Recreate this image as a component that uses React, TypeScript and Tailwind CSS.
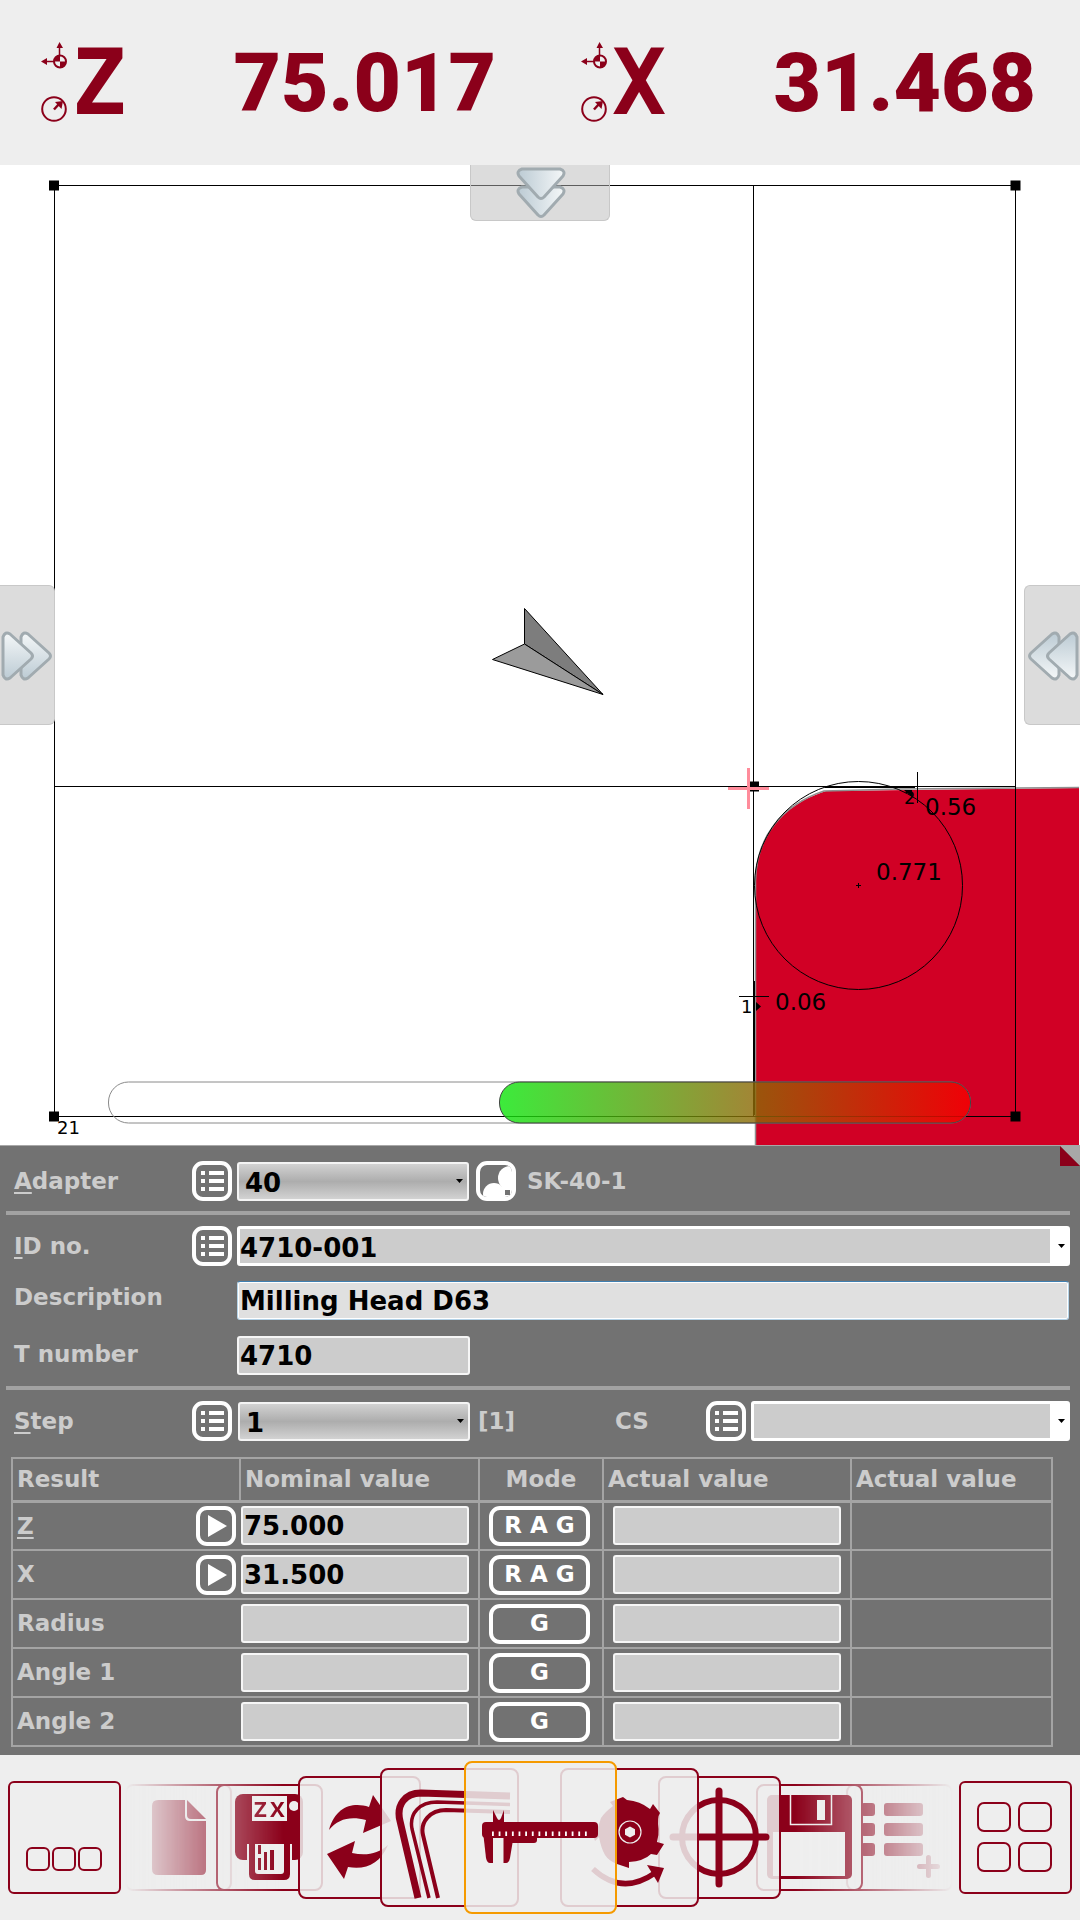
import React from 'react';

interface ResultRow {
  id: string;
  label: string;
  nominal: string;
  mode: string;
  jump?: boolean;
  underline?: boolean;
}

const RESULTS: ResultRow[] = [
  { id: 'z', label: 'Z', nominal: '75.000', mode: 'R A G', jump: true, underline: true },
  { id: 'x', label: 'X', nominal: '31.500', mode: 'R A G', jump: true },
  { id: 'radius', label: 'Radius', nominal: '', mode: 'G' },
  { id: 'angle1', label: 'Angle 1', nominal: '', mode: 'G' },
  { id: 'angle2', label: 'Angle 2', nominal: '', mode: 'G' },
];

const RED = '#8b001a';
const PAPER = '#eeeeee';

const FIELD = 'min-w-0 rounded-[3px] border-2 border-[#f6f6f6] bg-[#cccccc] px-px pt-0.5 text-[26px] font-bold text-black outline-none';

/* ---------- Axis readout ---------- */

const AxisReadout: React.FC<{ axis: string; value: string }> = ({ axis, value }) => (
  <div className="flex flex-1 items-center pl-10 pr-11 text-[#8b001a]">
    <svg width="28" height="84" viewBox="0 0 28 84" aria-hidden="true">
      <path d="M19.500 6V22M6 20.500H20" stroke={RED} strokeWidth="1.500" />
      <path d="M19.500 1L23 7H16.500zM1 20.500L7 17V24z" fill={RED} />
      <circle cx="20" cy="20.500" r="6" fill={PAPER} stroke={RED} strokeWidth="2" />
      <path d="M20 20.500V14.500A6 6 0 0 0 14 20.500zM20 20.500V26.500A6 6 0 0 0 26 20.500z" fill={RED} />
      <circle cx="14" cy="68" r="11.800" fill="none" stroke={RED} strokeWidth="2" />
      <path d="M14 68.500L19 63" stroke={RED} strokeWidth="2.500" />
      <path d="M15 61L23 60L21.500 68z" fill={RED} />
    </svg>
    <span className="ml-1 font-['DejaVu_Sans_Mono',monospace] text-[90px] leading-none font-bold">{axis}</span>
    <output className="ml-auto font-['Roboto',sans-serif] text-[82px] leading-none font-black">
      {value}
    </output>
  </div>
);

/* ---------- Camera view ---------- */

const Chevrons: React.FC<{ className: string; id: string }> = ({ className, id }) => (
  <svg width="50" height="52" viewBox="0 0 50 52" className={className} aria-hidden="true">
    <defs>
      <linearGradient id={id} x1="0" y1="0" x2="1" y2="0">
        <stop offset="0" stopColor="#bccbd4" />
        <stop offset="1" stopColor="#f4f7f8" />
      </linearGradient>
    </defs>
    <g fill={`url(#${id})`} stroke="#a1abb0" strokeWidth="3" strokeLinejoin="round">
      <path d="M6 20H44Q50 22 47 27L28 48Q25 51 22 48L3 27Q0 22 6 20z" />
      <path d="M6 2H44Q50 4 47 9L28 30Q25 33 22 30L3 9Q0 4 6 2z" />
    </g>
  </svg>
);

const CameraView: React.FC = () => (
  <section className="relative bg-white" aria-label="Camera view">
    <svg viewBox="0 0 1080 980" className="block w-full font-['DejaVu_Sans',sans-serif]">
      <defs>
        <linearGradient id="focus" x1="0" y1="0" x2="1" y2="0">
          <stop offset="0" stopColor="#0fe60e" />
          <stop offset="1" stopColor="#f70000" />
        </linearGradient>
      </defs>

      {/* work piece silhouette */}
      <path d="M756 980V840L755 716C756 672 782 640 826 626L1079 623V980z" fill="#d10025" />
      <path d="M755.500 980V716C756 672 782 640 824 626L900 624L1079 622.500" fill="none" stroke="#909090" strokeWidth="1.500" />

      {/* pointer */}
      <g stroke="#000" strokeLinejoin="round">
        <path d="M524.500 443.500V479L603 529.500z" fill="#7d7d7d" />
        <path d="M524.500 479L492.500 494.500L603 529.500z" fill="#9b9b9b" />
      </g>

      {/* measuring window */}
      <g fill="none" stroke="#000">
        <rect x="54.500" y="20.500" width="961" height="931" />
        <path d="M753.500 20V951M54 621.500H1015" />
        <path d="M825 622.500H915" />
        <path d="M754.500 816V950" />
        <circle cx="858.500" cy="720.500" r="104" />
        <path d="M856 720.500H861M858.500 718V723" />
        <path d="M917.500 607V638M739 831.500H769" />
      </g>
      <path d="M49 15.500h10v10h-10zM1010.500 15.500h10v10h-10zM49 946.500h10v10h-10zM1010.500 946.500h10v10h-10zM749 616.500h10v10h-10z" />
      <path d="M904 625H912V632zM756 837L761 841.500L756 846z" />
      <path d="M748.500 603V644M728 623.500H769" stroke="#ff8c9b" strokeWidth="3" />

      {/* focus bar */}
      <rect x="108.500" y="917" width="862" height="41" rx="20" fill="none" stroke="#8a8a8a" />
      <rect x="499.500" y="917" width="471" height="41" rx="20" fill="url(#focus)" fillOpacity=".81" stroke="#444" />

      <g fontSize="23">
        <text x="925" y="650">0.56</text>
        <text x="876" y="715">0.771</text>
        <text x="775" y="845">0.06</text>
      </g>
      <g fontSize="18">
        <text x="904" y="639">2</text>
        <text x="741" y="848">1</text>
        <text x="57" y="969">21</text>
      </g>
    </svg>

    <button type="button" aria-label="Open top panel" className="absolute top-0 left-1/2 flex h-14 w-[140px] -translate-x-1/2 justify-center rounded-b-md border border-t-0 border-[#c8c8c8] bg-[#bababa]/50">
      <Chevrons id="chev-top" className="mt-0.5 ml-0.5" />
    </button>
    <button type="button" aria-label="Open left panel" className="absolute top-[420px] left-0 flex h-[140px] w-[55px] items-center justify-center rounded-r-md border border-l-0 border-[#c8c8c8] bg-[#bababa]/50">
      <Chevrons id="chev-left" className="mt-0.5 -rotate-90" />
    </button>
    <button type="button" aria-label="Open right panel" className="absolute top-[420px] right-0 flex h-[140px] w-14 items-center justify-center rounded-l-md border border-r-0 border-[#c8c8c8] bg-[#bababa]/50">
      <Chevrons id="chev-right" className="mt-0.5 rotate-90" />
    </button>
  </section>
);

/* ---------- Tool form ---------- */

const IconButton: React.FC<{ label: string; children: React.ReactNode }> = ({ label, children }) => (
  <button type="button" aria-label={label} className="size-10 shrink-0 overflow-hidden rounded-[11px] border-4 border-white">
    <svg viewBox="0 0 32 32" className="block size-full" fill="#fff">{children}</svg>
  </button>
);

const ListButton: React.FC<{ label: string }> = ({ label }) => (
  <IconButton label={label}>
    <path d="M5 6h4v4H5zM13 6h15v4H13zM5 14h4v4H5zM13 14h15v4H13zM5 22h4v4H5zM13 22h15v4H13z" />
  </IconButton>
);

const Caret: React.FC<{ className: string }> = ({ className }) => (
  <svg width="7" height="4" viewBox="0 0 7 4" className={`pointer-events-none absolute top-1/2 -translate-y-1/2 ${className}`} aria-hidden="true">
    <path d="M0 0H7L3.500 4z" />
  </svg>
);

const GradientSelect: React.FC<{ id: string; value: string }> = ({ id, value }) => (
  <div className="relative w-[232px] shrink-0">
    <select id={id} defaultValue={value} className="block h-[39px] w-full appearance-none rounded-[3px] border-2 border-[#f4f4f4] bg-linear-to-b from-[#d2d2d2] via-[#adadad] to-[#d2d2d2] pl-1.5 text-[26px] font-bold text-black outline-none">
      <option>{value}</option>
    </select>
    <Caret className="right-1.5" />
  </div>
);

const ComboBox: React.FC<{ id: string; value: string }> = ({ id, value }) => (
  <div className="relative min-w-0 flex-1">
    <select id={id} defaultValue={value} className="block h-10 w-full appearance-none rounded-[3px] border-3 border-r-[20px] border-white bg-[#cccccc] text-[26px] font-bold text-black outline-none">
      <option>{value}</option>
    </select>
    <Caret className="right-[5px]" />
  </div>
);

const Divider: React.FC<{ className: string }> = ({ className }) => (
  <hr className={`mr-2.5 ml-1.5 h-1 border-0 bg-[#a2a2a2] ${className}`} />
);

const HotLabel: React.FC<{ htmlFor: string; hot?: string; className?: string; children: React.ReactNode }> = ({ htmlFor, hot, className = '', children }) => (
  <label htmlFor={htmlFor} className={`w-[178px] shrink-0 ${className}`}>
    {hot && <span className="underline underline-offset-3">{hot}</span>}
    {children}
  </label>
);

const ToolForm: React.FC = () => (
  <form className="relative border-t border-[#a8a8a8] bg-[#727272] pt-[15px] pb-2 text-[23px] font-bold text-[#cccccc]">
    <svg width="20" height="20" viewBox="0 0 20 20" className="absolute top-0 right-0" aria-hidden="true">
      <path d="M0 0H20V20z" fill="#a8a8a8" />
      <path d="M0 0L20 20H0z" fill={RED} />
    </svg>

    <div className="flex h-10 items-center pl-3.5">
      <HotLabel htmlFor="adapter" hot="A">dapter</HotLabel>
      <ListButton label="Adapter list" />
      <div className="ml-[5px]"><GradientSelect id="adapter" value="40" /></div>
      <div className="ml-[7px] flex items-center gap-[11px]">
        <IconButton label="Adapter picture">
          <circle cx="30" cy="13" r="12" />
          <circle cx="14" cy="29" r="11" />
          <path d="M21 22H32V32H21z" />
          <path d="M25 25H30V30H25z" fill="#727272" />
        </IconButton>
        <span>SK-40-1</span>
      </div>
    </div>

    <Divider className="mt-2.5" />

    <div className="mt-[11px] flex h-10 items-center pr-2.5 pl-3.5">
      <HotLabel htmlFor="id-no" hot="I">D no.</HotLabel>
      <ListButton label="ID list" />
      <div className="ml-[5px] flex min-w-0 flex-1"><ComboBox id="id-no" value="4710-001" /></div>
    </div>

    <div className="mt-[15px] flex pr-[11px] pl-3.5">
      <HotLabel htmlFor="description" className="leading-8">Description</HotLabel>
      <input id="description" defaultValue="Milling Head D63" className="ml-[45px] h-[39px] min-w-0 flex-1 rounded-[3px] border border-[#b4d3e8] border-t-[#3f7fb0] bg-[#e0e0e0] px-0.5 pt-0.5 text-[26px] font-bold text-black shadow-[inset_0_0_0_1px_#ffffff] outline-none" />
    </div>

    <div className="mt-4 flex pl-3.5">
      <HotLabel htmlFor="t-number" className="leading-9">T number</HotLabel>
      <input id="t-number" defaultValue="4710" className={`ml-[45px] h-[39px] w-[233px] ${FIELD}`} />
    </div>

    <Divider className="mt-[11px]" />

    <div className="mt-[11px] flex h-10 items-center pr-2.5 pl-3.5">
      <HotLabel htmlFor="step" hot="S">tep</HotLabel>
      <ListButton label="Step list" />
      <div className="ml-1.5"><GradientSelect id="step" value="1" /></div>
      <span className="ml-2 w-[137px]">[1]</span>
      <label htmlFor="cs" className="w-[91px]">CS</label>
      <ListButton label="CS list" />
      <div className="ml-[5px] flex min-w-0 flex-1"><ComboBox id="cs" value="" /></div>
    </div>

    <div className="mt-4 pr-[27px] pl-[11px]">
      <table className="w-full table-fixed border-collapse border-2 border-[#a4a4a4] text-left">
        <colgroup>
          <col className="w-[228px]" />
          <col className="w-[239px]" />
          <col className="w-[124px]" />
          <col className="w-[248px]" />
          <col />
        </colgroup>
        <thead>
          <tr className="h-[43px] border-b-3 border-[#a4a4a4]">
            <th className="border-r-2 border-[#a4a4a4] pl-1">Result</th>
            <th className="border-r-2 border-[#a4a4a4] pl-1">Nominal value</th>
            <th className="border-r-2 border-[#a4a4a4] text-center">Mode</th>
            <th className="border-r-2 border-[#a4a4a4] pl-1">Actual value</th>
            <th className="pl-1">Actual value</th>
          </tr>
        </thead>
        <tbody>
          {RESULTS.map(row => (
            <tr key={row.id} className="h-[49px] border-b-2 border-[#a4a4a4]">
              <td className="p-0">
                <div className="flex h-10 items-center justify-between pr-1 pl-1">
                  <label htmlFor={`nominal-${row.id}`} className={row.underline ? 'underline underline-offset-3' : ''}>{row.label}</label>
                  {row.jump && (
                    <IconButton label={`Move to ${row.label}`}>
                      <path d="M8 5L27 16L8 27z" />
                    </IconButton>
                  )}
                </div>
              </td>
              <td className="border-r-2 border-[#a4a4a4] p-0">
                <input id={`nominal-${row.id}`} defaultValue={row.nominal} className={`ml-px block h-[39px] w-[228px] ${FIELD}`} />
              </td>
              <td className="border-r-2 border-[#a4a4a4] p-0">
                <button type="button" className="mx-[9px] block h-10 w-[101px] rounded-[11px] border-4 border-white leading-none whitespace-nowrap text-white">
                  {row.mode}
                </button>
              </td>
              <td className="border-r-2 border-[#a4a4a4] p-0">
                <input aria-label={`${row.label} actual value`} className={`ml-[9px] block h-[39px] w-[228px] ${FIELD}`} />
              </td>
              <td className="p-0" />
            </tr>
          ))}
        </tbody>
      </table>
    </div>
  </form>
);

/* ---------- Bottom carousel ---------- */

const PageIcon = () => (
  <g fill={RED}>
    <path d="M33 16H60V32Q60 37 65 37H81V86Q81 91 76 91H33Q27 91 27 85V22Q27 16 33 16z" />
    <path d="M62 16L81 35H66Q62 35 62 31z" />
  </g>
);

const PrinterIcon = () => (
  <g>
    <rect x="19" y="10" width="68" height="66" rx="8" fill={RED} />
    <rect x="36" y="12" width="35" height="25" fill={PAPER} />
    <g className="font-['Open_Sans',sans-serif]" fontSize="22" fontWeight="bold" fill={RED}>
      <text x="38" y="33">Z</text>
      <text x="54" y="33">X</text>
    </g>
    <circle cx="78" cy="22" r="5" fill={PAPER} />
    <path d="M31 60H76V77H31z" fill={PAPER} />
    <path d="M33 60H74V90Q74 96 68 96H39Q33 96 33 90z" fill={RED} />
    <path d="M39 60H68V87Q68 90 65 90H42Q39 90 39 87z" fill={PAPER} />
    <path d="M42 61h3v9h-3zM42 74h3v12h-3zM48 68h3v18h-3zM54 66h4v20h-4z" fill={RED} />
  </g>
);

const SyncIcon = () => (
  <g fill={RED}>
    <path d="M31 54C38 30 55 26 71 31L75 19L93 45L65 57L68 44C52 40 40 43 31 54z" />
    <path d="M29 78L57 65L54 77C68 80 80 78 90 69C82 88 68 94 50 91L46 103z" />
  </g>
);

const HexKeyIcon = () => (
  <g fill="none" stroke={RED}>
    <path d="M130 28L41 25C25 25 16 37 20 53L38 130" strokeWidth="7" />
    <path d="M130 36.500L57 34C40 34 29 45 32 61L49 130" strokeWidth="3.500" />
    <path d="M130 44L66 42C50 42 40 54 43 67L58 130" strokeWidth="4" />
  </g>
);

const CaliperIcon = () => (
  <g fill={RED}>
    <rect x="18" y="61" width="116" height="16" rx="4" />
    <path d="M29 49L33 57Q35 61 37 57L40 49V62H29z" />
    <path d="M18.500 66L22 97Q23 102 26 102H29V75z" />
    <path d="M39.500 75V102H42Q45 102 46 97L48.500 82H70Q73 82 73 79V76z" />
    {Array.from({ length: 15 }, (_, i) => (
      <rect key={i} x={28 + i * 6.64} y="70.500" width="1.800" height="4.500" fill="#fff" />
    ))}
  </g>
);

const CutterIcon = () => (
  <g>
    <path d="M50 34L63 29L67 32Q80 33 90 41L93 36L100 45Q97 49 98.500 61Q99 67 97 74L104 76L97 87L91 86Q84 93 69 94V100L57 96Q49 93 45 87Q41 80 39 69L35 73L34 70Q38 60 41 50Q45 44 53 38z" fill={RED} />
    <circle cx="70" cy="64" r="11" fill="none" stroke={PAPER} strokeWidth="1.200" />
    <path d="M70 58.500L75 61.200V66.800L70 69.500L65 66.800V61.200z" fill={PAPER} />
    <path d="M33 101Q62 128 95 105" fill="none" stroke={RED} strokeWidth="5.500" />
    <path d="M87 97L104 100L98 115z" fill={RED} />
  </g>
);

const CrosshairIcon = () => (
  <g fill="none" stroke={RED}>
    <circle cx="61" cy="61" r="37" strokeWidth="6" />
    <path d="M61 15V108M15 61H108" strokeWidth="7" strokeLinecap="round" />
  </g>
);

const DiskIcon = () => (
  <g>
    <rect x="11" y="11" width="85" height="84" rx="5" fill={RED} />
    <path d="M34.500 11V40.500H75.500V11" fill="none" stroke={PAPER} strokeWidth="1.500" />
    <path d="M61 16h8v20h-8zM17 48h72v44H17z" fill={PAPER} />
  </g>
);

const AddListIcon = () => (
  <g fill={RED}>
    {[19, 39, 59].map(y => (
      <React.Fragment key={y}>
        <rect x="15" y={y} width="14" height="13" rx="3" />
        <rect x="38" y={y} width="39" height="13" rx="3" />
      </React.Fragment>
    ))}
    <path d="M82.500 73.500V91.500M73.500 82.500H91.500" stroke={RED} strokeWidth="5" strokeLinecap="round" />
  </g>
);

interface CarouselItem {
  label: string;
  size: number;
  className: string;
  icon: React.FC;
}

const CAROUSEL: CarouselItem[] = [
  { label: 'New', size: 107, className: 'z-0 w-[107px] border-[#8b001a]', icon: PageIcon },
  { label: 'Print label', size: 107, className: 'z-10 -ml-4 w-[107px] border-[#8b001a]', icon: PrinterIcon },
  { label: 'Refresh', size: 123, className: 'z-20 -ml-[25px] w-[123px] border-[#8b001a]', icon: SyncIcon },
  { label: 'Hex keys', size: 139, className: 'z-30 -ml-[41px] w-[139px] border-[#8b001a]', icon: HexKeyIcon },
  { label: 'Measure', size: 153, className: 'z-40 -ml-[55px] w-[153px] border-[#f59a00]', icon: CaliperIcon },
  { label: 'Cutter', size: 139, className: 'z-30 -ml-[57px] w-[139px] border-[#8b001a]', icon: CutterIcon },
  { label: 'Crosshair', size: 123, className: 'z-20 -ml-[41px] w-[123px] border-[#8b001a]', icon: CrosshairIcon },
  { label: 'Save', size: 107, className: 'z-10 -ml-[25px] w-[107px] border-[#8b001a]', icon: DiskIcon },
  { label: 'Add to list', size: 107, className: 'z-0 -ml-[17px] w-[107px] border-[#8b001a]', icon: AddListIcon },
];

const Toolbar: React.FC = () => (
  <nav className="flex h-[165px] items-center justify-between bg-[#eeeeee] px-2">
    <button type="button" aria-label="Status" className="size-[113px] rounded-md border-2 border-[#8b001a]">
      <svg viewBox="2 2 109 109" className="block size-full" fill="none" stroke={RED} strokeWidth="2">
        <rect x="19" y="67" width="22" height="22" rx="5" />
        <rect x="45" y="67" width="22" height="22" rx="5" />
        <rect x="71" y="67" width="22" height="22" rx="5" />
      </svg>
    </button>

    <div className="mr-0.5 flex items-center [mask-image:linear-gradient(to_right,transparent,#000_158px,#000_calc(100%-158px),transparent)]">
      {CAROUSEL.map(({ label, size, className, icon: Icon }) => (
        <button key={label} type="button" aria-label={label} className={`relative aspect-square shrink-0 rounded-lg border-2 bg-[#eeeeee]/86 ${className}`}>
          <svg viewBox={`2 2 ${size - 4} ${size - 4}`} className="block size-full">
            <Icon />
          </svg>
        </button>
      ))}
    </div>

    <button type="button" aria-label="All functions" className="size-[113px] rounded-md border-2 border-[#8b001a]">
      <svg viewBox="2 2 109 109" className="block size-full" fill="none" stroke={RED} strokeWidth="2">
        <rect x="19" y="22" width="32" height="28" rx="6" />
        <rect x="60" y="22" width="32" height="28" rx="6" />
        <rect x="19" y="62" width="32" height="28" rx="6" />
        <rect x="60" y="62" width="32" height="28" rx="6" />
      </svg>
    </button>
  </nav>
);

const App: React.FC = () => (
  <main className="bg-[#eeeeee] font-['DejaVu_Sans',sans-serif]">
    <header className="flex h-[165px] bg-[#eeeeee]">
      <AxisReadout axis="Z" value="75.017" />
      <AxisReadout axis="X" value="31.468" />
    </header>
    <CameraView />
    <ToolForm />
    <Toolbar />
  </main>
);

export default App;
